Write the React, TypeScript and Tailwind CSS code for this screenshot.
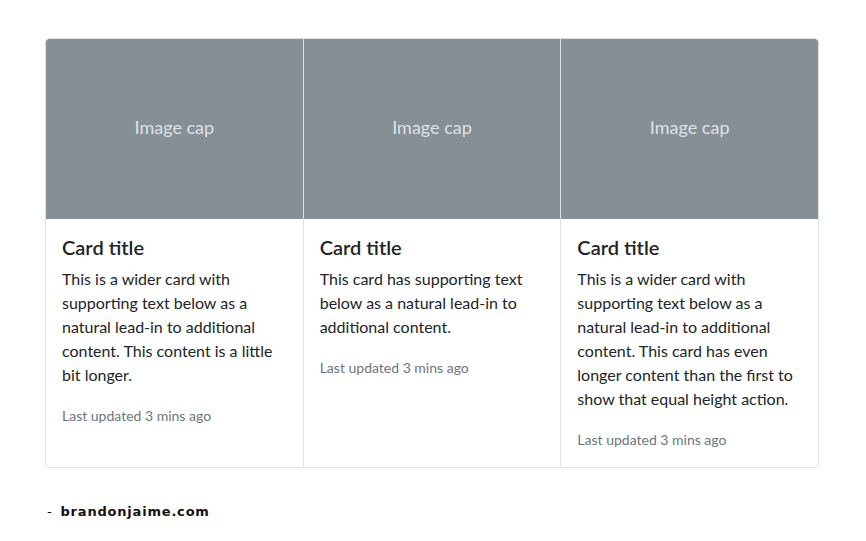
const cards = [
  {
    text: 'This is a wider card with supporting text below as a natural lead-in to additional content. This content is a little bit longer.',
  },
  {
    text: 'This card has supporting text below as a natural lead-in to additional content.',
  },
  {
    text: 'This is a wider card with supporting text below as a natural lead-in to additional content. This card has even longer content than the first to show that equal height action.',
  },
];

function Card({ text, first, last }: { text: string; first: boolean; last: boolean }) {
  return (
    <div
      className={
        'flex flex-1 flex-col bg-white ' +
        (first ? '' : 'border-l border-[#dfdfdf]')
      }>
      <div
        className={
          'flex h-[180px] items-center justify-center bg-[#868e96] pb-[3px] text-[18px] text-[#dee2e6] ' +
          (first ? 'rounded-tl-[3px] ' : '') +
          (last ? 'rounded-tr-[3px]' : '')
        }>
        Image cap
      </div>
      <div className="flex-1 px-4 pt-4 pb-[15px]">
        <h5 className="mb-2 text-[20px] font-semibold leading-6 text-[#212529]">Card title</h5>
        <p className="mb-4 text-base leading-6 text-[#212529]">{text}</p>
        <p className="text-base leading-6">
          <small className="text-[14px] text-[#6c757d]">Last updated 3 mins ago</small>
        </p>
      </div>
    </div>
  );
}

export default function App() {
  return (
    <div className="min-h-[541px] bg-white px-[45px] pt-[38px] font-['Segoe_UI',Lato,sans-serif]">
      <div className="flex w-[774px] overflow-hidden rounded border border-[#dfdfdf]">
        {cards.map((c, i) => (
          <Card key={i} text={c.text} first={i === 0} last={i === cards.length - 1} />
        ))}
      </div>
      <div className="mt-[34px] flex items-baseline pl-[2px] font-['DejaVu_Sans',sans-serif] text-[13px] tracking-[0.8px] text-[#111]">
        <span className="font-normal">-</span>
        <span className="ml-[8px] font-bold">brandonjaime.com</span>
      </div>
    </div>
  );
}
